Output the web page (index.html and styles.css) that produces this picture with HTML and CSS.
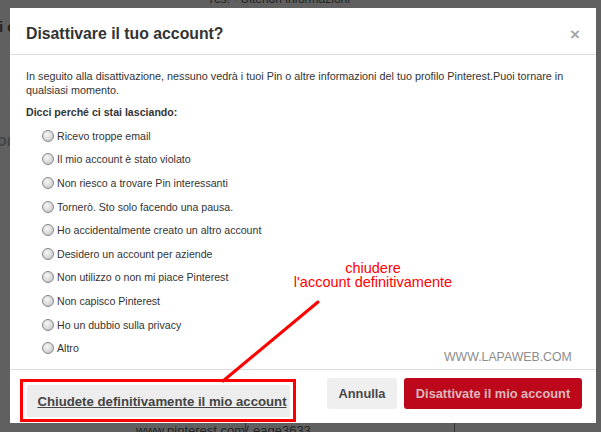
FILE: index.html
```html
<!DOCTYPE html>
<html lang="it">
<head>
  <meta charset="UTF-8">
  <meta name="viewport" content="width=device-width, initial-scale=1.0">
  <title>Disattivare il tuo account</title>
  <link rel="stylesheet" href="styles.css">
</head>
<body>
  <div class="page">
    <div class="page-top">Yes! - Ulteriori informazioni</div>
    <div class="page-head">i c</div>
    <div class="page-side">or</div>
    <div class="page-foot">
      <span class="cell cell-url">www.pinterest.com/</span>
      <span class="cell cell-user">eage3633</span>
    </div>
  </div>

  <div class="modal">
    <div class="modal-header">
      <h1>Disattivare il tuo account?</h1>
      <span class="close">&times;</span>
    </div>

    <div class="modal-body">
      <p class="intro">In seguito alla disattivazione, nessuno vedrà i tuoi Pin o altre informazioni del tuo profilo Pinterest.Puoi tornare in qualsiasi momento.</p>
      <p class="question">Dicci perché ci stai lasciando:</p>
      <ul class="reasons">
        <li><label><input type="radio" name="reason">Ricevo troppe email</label></li>
        <li><label><input type="radio" name="reason">Il mio account è stato violato</label></li>
        <li><label><input type="radio" name="reason">Non riesco a trovare Pin interessanti</label></li>
        <li><label><input type="radio" name="reason">Tornerò. Sto solo facendo una pausa.</label></li>
        <li><label><input type="radio" name="reason">Ho accidentalmente creato un altro account</label></li>
        <li><label><input type="radio" name="reason">Desidero un account per aziende</label></li>
        <li><label><input type="radio" name="reason">Non utilizzo o non mi piace Pinterest</label></li>
        <li><label><input type="radio" name="reason">Non capisco Pinterest</label></li>
        <li><label><input type="radio" name="reason">Ho un dubbio sulla privacy</label></li>
        <li><label><input type="radio" name="reason">Altro</label></li>
      </ul>
    </div>

    <div class="modal-footer">
      <div class="highlight">
        <button class="btn btn-close">Chiudete definitivamente il mio account</button>
      </div>
      <button class="btn btn-cancel">Annulla</button>
      <button class="btn btn-red">Disattivate il mio account</button>
    </div>
  </div>

  <div class="note">
    <div>chiudere</div>
    <div>l'account definitivamente</div>
  </div>
  <svg class="note-arrow" width="101" height="85" viewBox="0 0 101 85">
    <line x1="98" y1="3" x2="3" y2="82" stroke="#ff0000" stroke-width="3" stroke-linecap="round"/>
  </svg>
  <div class="watermark">WWW.LAPAWEB.COM</div>
</body>
</html>
```

FILE: styles.css
```css
html, body {
  margin: 0;
  height: 100%;
}
body {
  font-family: "Liberation Sans", Arial, sans-serif;
  background-color: #606060;
  color: #333;
  overflow: hidden;
  position: relative;
}

/* page behind the overlay */
.page {
  height: 432px;
  display: flex;
  flex-direction: column;
  color: #232323;
}
.page-top {
  margin-top: -8px;
  padding-left: 207px;
  font-size: 12px;
  line-height: 14px;
}
.page-head {
  margin-top: 12px;
  margin-left: -1px;
  font-size: 15px;
  font-weight: bold;
  line-height: 18px;
}
.page-side {
  margin-top: 96px;
  margin-left: -3px;
  font-size: 16px;
  font-weight: bold;
  color: #474747;
}
.page-foot {
  margin-top: auto;
  margin-bottom: -6px;
  display: flex;
  padding-left: 136px;
  font-size: 13px;
  line-height: 15px;
}
.cell-url {
  width: 109px;
  border-right: 1px solid #333;
}
.cell-user {
  width: 201px;
  padding-left: 7px;
  border-right: 1px solid #333;
}

/* dialog */
.modal {
  position: absolute;
  top: 8px;
  left: 10px;
  width: 586px;
  height: 415px;
  background: #fff;
  display: flex;
  flex-direction: column;
}
.modal-header {
  display: flex;
  align-items: center;
  justify-content: space-between;
  padding: 16px 16px 10px 16px;
  border-bottom: 1px solid #ddd;
}
.modal-header h1 {
  margin: 0;
  font-size: 15.8px;
  line-height: 18px;
  color: #333;
}
.close {
  font-size: 17px;
  font-weight: bold;
  line-height: 18px;
  color: #a5a5a5;
  margin-top: 2px;
}
.modal-body {
  flex: 1;
  padding: 14px 16px 0 16px;
  font-size: 10.6px;
  line-height: 14px;
}
.intro {
  margin: 0 0 8px 0;
  font-size: 10.8px;
}
.question {
  margin: 0;
  font-weight: bold;
}
.reasons {
  list-style: none;
  margin: 5px 0 0 0;
  padding-left: 16px;
}
.reasons li {
  height: 23.6px;
  display: flex;
  align-items: center;
}
.reasons label {
  display: flex;
  align-items: center;
}
.reasons input {
  appearance: none;
  -webkit-appearance: none;
  width: 12px;
  height: 12px;
  margin: 0 3px 0 0;
  border: 1px solid #868686;
  border-radius: 50%;
  background: radial-gradient(circle at 40% 35%, #f6f6f6 0%, #dcdcdc 50%, #bdbdbd 100%);
}

.modal-footer {
  height: 53px;
  border-top: 1px solid #ddd;
  display: flex;
  align-items: flex-start;
  padding: 0 14px 0 10px;
}
.highlight {
  margin-top: 9px;
  border: 3px solid #ff0000;
  padding: 3px 3px 2px 4px;
}
.btn {
  font-family: "Liberation Sans", Arial, sans-serif;
  font-weight: bold;
  font-size: 12.8px;
  border: 0;
  border-radius: 3px;
  height: 31px;
  padding: 0;
}
.btn-close {
  width: 263px;
  height: 32px;
  padding-left: 7px;
  background: #ededed;
  color: #444;
  font-size: 13.2px;
  text-decoration: underline;
  border-radius: 2px;
}
.btn-cancel {
  margin-left: auto;
  margin-top: 8px;
  width: 70px;
  background: #efefef;
  color: #484848;
}
.btn-red {
  margin-left: 7px;
  margin-top: 8px;
  width: 178px;
  background: #bd081c;
  color: #dcb8bd;
}

/* annotation over the screenshot */
.note {
  position: absolute;
  left: 290px;
  top: 261px;
  width: 166px;
  text-align: center;
  font-size: 14.5px;
  line-height: 14px;
  color: #ff0000;
}
.note-arrow {
  position: absolute;
  left: 220px;
  top: 299px;
}
.watermark {
  position: absolute;
  left: 444px;
  top: 350px;
  font-size: 12.3px;
  line-height: 14px;
  color: #8c8c8c;
}
```
